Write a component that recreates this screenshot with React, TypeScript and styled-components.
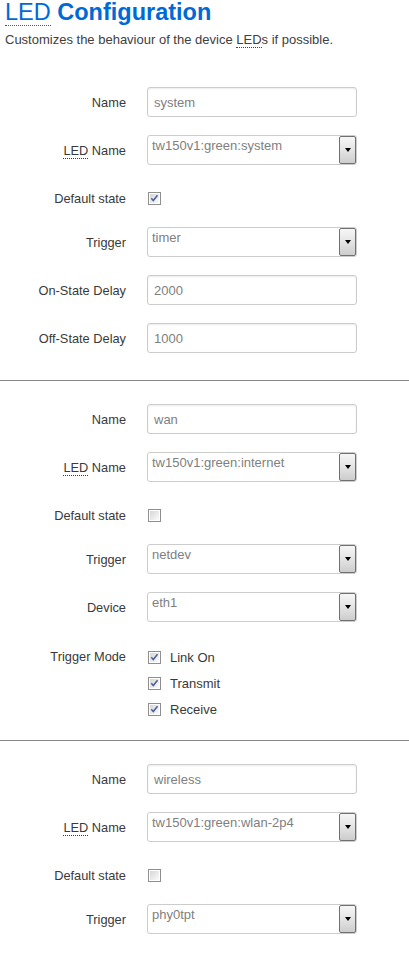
import * as React from "react";
import styled, { createGlobalStyle } from "styled-components";

const GlobalStyle = createGlobalStyle`
  html, body {
    margin: 0;
    padding: 0;
    background: #fff;
  }
  body {
    font-family: "Liberation Sans", Arial, sans-serif;
    color: #404040;
  }
`;

const Page = styled.div`
  width: 409px;
`;

const Header = styled.header`
  padding: 0 5px;
  margin-bottom: 17px;
`;

const Title = styled.h2`
  margin: 0;
  font-size: 23.5px;
  line-height: 24px;
  font-weight: bold;
  color: #0069d6;
`;

const Abbr = styled.abbr<{ $thin?: boolean }>`
  text-decoration: none;
  border-bottom: 1px dotted currentColor;
  cursor: help;
  font-weight: ${(p) => (p.$thin ? "normal" : "inherit")};
`;

const Description = styled.p`
  margin: 8px 0 0;
  font-size: 13px;
  line-height: 15px;
`;

const Section = styled.fieldset`
  margin: 0;
  border: 0;
  padding: 14px 0 18px;
  min-width: 0;

  & + & {
    border-top: 1px solid #888;
  }
`;

const Row = styled.div<{ $kind?: "field" | "check" | "list" }>`
  display: grid;
  grid-template-columns: 126px 210px;
  column-gap: 21px;
  align-items: ${(p) => (p.$kind === "list" ? "start" : "center")};
  padding: ${(p) =>
    p.$kind === "check" ? "17px 0 12px" : p.$kind === "list" ? "13px 0 0" : "9px 0"};
`;

const Label = styled.label<{ $tall?: boolean }>`
  text-align: right;
  font-size: 12.8px;
  line-height: ${(p) => (p.$tall ? "26px" : "15px")};
  color: #3a3a3a;
  white-space: nowrap;
`;

const TextInput = styled.input`
  box-sizing: border-box;
  width: 210px;
  height: 30px;
  margin: 0;
  padding: 0 6px;
  border: 1px solid #ccc;
  border-radius: 3px;
  box-shadow: inset 0 1px 2px rgba(0, 0, 0, 0.08);
  font-family: "Liberation Sans", Arial, sans-serif;
  font-size: 13px;
  color: #808080;
  background: #fff;
  outline: none;
`;

const SelectBox = styled.div`
  box-sizing: border-box;
  width: 210px;
  height: 30px;
  display: flex;
  border: 1px solid #ccc;
  border-radius: 3px;
  background: #fff;
`;

const SelectValue = styled.span`
  flex: 1;
  padding: 3px 4px 0;
  font-size: 13px;
  line-height: 14px;
  color: #808080;
  white-space: nowrap;
  overflow: hidden;
`;

const DropButton = styled.span`
  box-sizing: border-box;
  width: 17px;
  display: flex;
  align-items: center;
  justify-content: center;
  border: 1px solid #707070;
  border-radius: 2px;
  background: linear-gradient(#f6f6f6, #e4e4e4 50%, #cdcdcd);

  &::after {
    content: "";
    border-left: 3.5px solid transparent;
    border-right: 3.5px solid transparent;
    border-top: 4px solid #000;
  }
`;

const OptionList = styled.div`
  display: flex;
  flex-direction: column;
`;

const Option = styled.label`
  display: flex;
  align-items: center;
  gap: 9px;
  height: 26px;
  font-size: 13px;
  color: #3a3a3a;
`;

const CheckWrap = styled.span`
  display: inline-flex;
  width: 13px;
  height: 13px;
  margin-left: 1px;
`;

const Checkbox = ({ checked }: { checked?: boolean }) => {
  const id = React.useId();
  return (
    <CheckWrap>
      <svg width="13" height="13" viewBox="0 0 13 13">
        <defs>
          <linearGradient id={id} x1="0" y1="0" x2="1" y2="1">
            <stop offset="0" stopColor="#d6d6d6" />
            <stop offset="1" stopColor="#fbfbfb" />
          </linearGradient>
        </defs>
        <rect x="0.5" y="0.5" width="12" height="12" fill="#fff" stroke="#8f8f8f" />
        <rect x="2" y="2" width="9" height="9" fill={`url(#${id})`} />
        {checked && (
          <path
            d="M3.3 6.3 L5.3 8.5 L9.5 3.3"
            fill="none"
            stroke="#4a5f9a"
            strokeWidth="1.5"
          />
        )}
      </svg>
    </CheckWrap>
  );
};

const LedLabel = () => (
  <>
    <Abbr title="Light Emitting Diode">LED</Abbr> Name
  </>
);

const TextField = ({ label, value }: { label: string; value: string }) => (
  <Row>
    <Label>{label}</Label>
    <TextInput readOnly value={value} />
  </Row>
);

const SelectField = ({ label, value }: { label: React.ReactNode; value: string }) => (
  <Row>
    <Label>{label}</Label>
    <SelectBox>
      <SelectValue>{value}</SelectValue>
      <DropButton />
    </SelectBox>
  </Row>
);

const CheckField = ({ label, checked }: { label: string; checked?: boolean }) => (
  <Row $kind="check">
    <Label>{label}</Label>
    <Checkbox checked={checked} />
  </Row>
);

export default function App() {
  return (
    <Page>
      <GlobalStyle />
      <Header>
        <Title>
          <Abbr $thin title="Light Emitting Diode">
            LED
          </Abbr>{" "}
          Configuration
        </Title>
        <Description>
          Customizes the behaviour of the device <Abbr title="Light Emitting Diode">LED</Abbr>s if
          possible.
        </Description>
      </Header>

      <Section>
        <TextField label="Name" value="system" />
        <SelectField label={<LedLabel />} value="tw150v1:green:system" />
        <CheckField label="Default state" checked />
        <SelectField label="Trigger" value="timer" />
        <TextField label="On-State Delay" value="2000" />
        <TextField label="Off-State Delay" value="1000" />
      </Section>

      <Section>
        <TextField label="Name" value="wan" />
        <SelectField label={<LedLabel />} value="tw150v1:green:internet" />
        <CheckField label="Default state" />
        <SelectField label="Trigger" value="netdev" />
        <SelectField label="Device" value="eth1" />
        <Row $kind="list">
          <Label $tall>Trigger Mode</Label>
          <OptionList>
            {["Link On", "Transmit", "Receive"].map((mode) => (
              <Option key={mode}>
                <Checkbox checked />
                {mode}
              </Option>
            ))}
          </OptionList>
        </Row>
      </Section>

      <Section>
        <TextField label="Name" value="wireless" />
        <SelectField label={<LedLabel />} value="tw150v1:green:wlan-2p4" />
        <CheckField label="Default state" />
        <SelectField label="Trigger" value="phy0tpt" />
      </Section>
    </Page>
  );
}
